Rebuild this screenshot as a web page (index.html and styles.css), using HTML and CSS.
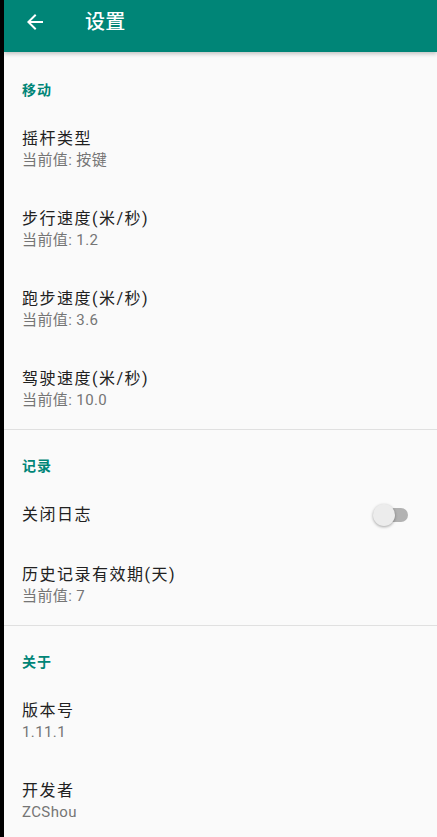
FILE: index.html
```html
<!DOCTYPE html>
<html lang="zh-CN">
<head>
<meta charset="utf-8">
<title>设置</title>
<link rel="stylesheet" href="styles.css">
</head>
<body>
<div class="app">
  <header class="toolbar">
    <svg class="back" width="24" height="24" viewBox="0 0 24 24"><path d="M20 11H7.83l5.59-5.59L12 4l-8 8 8 8 1.41-1.41L7.83 13H20v-2z" fill="#fff"/></svg>
    <h1 class="title">设置</h1>
  </header>
  <main class="content">
    <section class="group">
      <div class="category first">移动</div>
      <div class="pref"><div class="pref-title">摇杆类型</div><div class="pref-summary">当前值: 按键</div></div>
      <div class="pref"><div class="pref-title">步行速度(米/秒)</div><div class="pref-summary">当前值: 1.2</div></div>
      <div class="pref"><div class="pref-title">跑步速度(米/秒)</div><div class="pref-summary">当前值: 3.6</div></div>
      <div class="pref"><div class="pref-title">驾驶速度(米/秒)</div><div class="pref-summary">当前值: 10.0</div></div>
    </section>
    <section class="group">
      <div class="category">记录</div>
      <div class="pref switch-row">
        <div class="pref-title">关闭日志</div>
        <div class="switch"><span class="track"></span><span class="thumb"></span></div>
      </div>
      <div class="pref"><div class="pref-title">历史记录有效期(天)</div><div class="pref-summary">当前值: 7</div></div>
    </section>
    <section class="group">
      <div class="category">关于</div>
      <div class="pref"><div class="pref-title">版本号</div><div class="pref-summary">1.11.1</div></div>
      <div class="pref"><div class="pref-title">开发者</div><div class="pref-summary">ZCShou</div></div>
    </section>
  </main>
</div>
</body>
</html>
```

FILE: styles.css
```css
html, body {
  margin: 0;
  padding: 0;
  background: #000;
  height: 100%;
  overflow: hidden;
}
body {
  font-family: Roboto, "Noto Sans CJK SC", "Noto Sans", sans-serif;
}
.app {
  margin-left: 4px;
  background: #fafafa;
  min-height: 100%;
}
.toolbar {
  position: relative;
  z-index: 2;
  height: 52px;
  background: #008577;
  display: flex;
  align-items: flex-start;
  padding-top: 10px;
  box-sizing: border-box;
  box-shadow: 0 2px 4px rgba(0,0,0,0.22);
}
.back {
  margin-left: 19px;
  width: 24px;
  height: 24px;
}
.title {
  margin: 0 0 0 38px;
  font-size: 20px;
  line-height: 24px;
  font-weight: 500;
  letter-spacing: 0.3px;
  color: #fff;
}
.group + .group {
  border-top: 1px solid #e0e0e0;
}
.category {
  padding: 26px 18px 9px 18px;
  font-size: 14px;
  line-height: 20px;
  font-weight: 700;
  letter-spacing: 1px;
  color: #008577;
}
.category.first {
  padding-top: 28px;
}
.pref {
  padding: 19px 18px;
  height: 42px;
}
.pref-title {
  font-size: 16px;
  line-height: 22px;
  letter-spacing: 1.5px;
  color: #212121;
}
.pref-summary {
  font-size: 15px;
  line-height: 20px;
  letter-spacing: 0.4px;
  color: #757575;
}
.switch-row {
  height: 60px;
  padding: 0 18px;
  display: flex;
  align-items: center;
  justify-content: space-between;
}
.switch {
  position: relative;
  width: 35px;
  height: 24px;
  margin-right: 11px;
}
.track {
  position: absolute;
  left: 1px;
  top: 5px;
  width: 34px;
  height: 14px;
  border-radius: 7px;
  background: #b2b2b2;
}
.thumb {
  position: absolute;
  left: 0;
  top: 1px;
  width: 22px;
  height: 22px;
  border-radius: 50%;
  background: #ececec;
  box-shadow: 0 1px 3px rgba(0,0,0,0.35);
}
```
